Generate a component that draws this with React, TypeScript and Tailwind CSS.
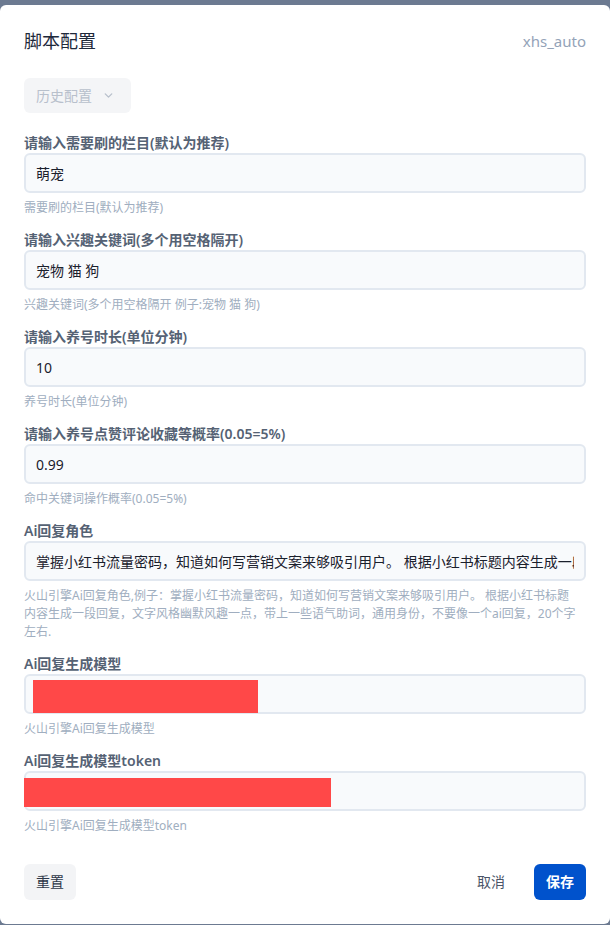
import { ChevronDown } from 'lucide-react';

type Field = {
    label: string;
    value: string;
    help: string;
    redact?: string;
};

const fields: Field[] = [
    { label: '请输入需要刷的栏目(默认为推荐)', value: '萌宠', help: '需要刷的栏目(默认为推荐)' },
    { label: '请输入兴趣关键词(多个用空格隔开)', value: '宠物 猫 狗', help: '兴趣关键词(多个用空格隔开 例子:宠物 猫 狗)' },
    { label: '请输入养号时长(单位分钟)', value: '10', help: '养号时长(单位分钟)' },
    { label: '请输入养号点赞评论收藏等概率(0.05=5%)', value: '0.99', help: '命中关键词操作概率(0.05=5%)' },
    {
        label: 'Ai回复角色',
        value: '掌握小红书流量密码，知道如何写营销文案来够吸引用户。 根据小红书标题内容生成一段回复，文字风格幽默风趣一点，带上一些语气助词，通用身份，不要像一个ai回复，20个字左右.',
        help: '火山引擎Ai回复角色,例子：掌握小红书流量密码，知道如何写营销文案来够吸引用户。 根据小红书标题内容生成一段回复，文字风格幽默风趣一点，带上一些语气助词，通用身份，不要像一个ai回复，20个字左右.'
    },
    { label: 'Ai回复生成模型', value: '', help: '火山引擎Ai回复生成模型', redact: 'model' },
    { label: 'Ai回复生成模型token', value: '', help: '火山引擎Ai回复生成模型token', redact: 'token' }
];

export default function App() {
    return (
        <div
            className="min-h-[925px] bg-[#6c7a91] pt-[5px]"
            style={{ fontFamily: '"Noto Sans", "Noto Sans CJK SC", sans-serif' }}
        >
            <div className="min-h-[918px] bg-white rounded-md px-6 pt-[22px] pb-6">
                {/* Header */}
                <div className="flex items-center justify-between h-7">
                    <h2 className="text-[18px] leading-7 text-[#1e293b]">脚本配置</h2>
                    <span className="text-[15px] text-[#94a3b8]">xhs_auto</span>
                </div>

                {/* History */}
                <button className="mt-[23px] h-[35px] pl-3 pr-4 rounded-md bg-[#f4f5f7] flex items-center gap-2.5 text-sm text-[#b8c0cc]">
                    <span>历史配置</span>
                    <ChevronDown size={13} strokeWidth={2.5} />
                </button>

                {/* Fields */}
                <div className="mt-5 flex flex-col gap-[13px]">
                    {fields.map((f) => (
                        <div key={f.label}>
                            <label className="block text-sm leading-5 font-semibold text-[#556274]">{f.label}</label>
                            <div className="relative">
                                <input
                                    readOnly
                                    value={f.value}
                                    className="w-full h-10 px-2.5 rounded-md border-2 border-[#e2e8f0] bg-[#f8fafc] text-sm text-[#1a202c] outline-none"
                                />
                                {f.redact === 'model' && (
                                    <div className="absolute left-[9px] top-[6px] w-[225px] h-[33px] bg-[#ff4848]" />
                                )}
                                {f.redact === 'token' && (
                                    <div className="absolute left-0 top-[7px] w-[307px] h-[29px] bg-[#ff4848]" />
                                )}
                            </div>
                            <p className="mt-1.5 pr-[6px] text-xs leading-[18px] text-[#a0aec0]">{f.help}</p>
                        </div>
                    ))}
                </div>

                {/* Footer */}
                <div className="mt-[29px] flex items-center justify-between">
                    <button className="h-9 px-3 rounded-md bg-[#f3f4f6] text-sm text-[#2d3748]">重置</button>
                    <div className="flex items-center gap-[17px]">
                        <button className="h-9 px-3 rounded-md text-sm text-[#4a5568]">取消</button>
                        <button className="h-9 px-3 rounded-md bg-[#0052cc] text-sm font-bold text-white">保存</button>
                    </div>
                </div>
            </div>
        </div>
    );
}
